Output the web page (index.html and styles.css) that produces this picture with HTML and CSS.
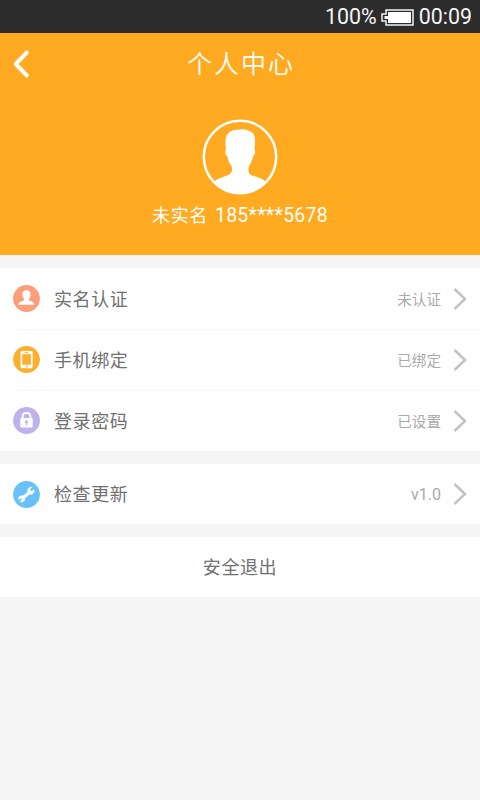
FILE: index.html
```html
<!DOCTYPE html>
<html lang="zh-CN">
<head>
<meta charset="utf-8">
<title>个人中心</title>
<link rel="stylesheet" href="styles.css">
</head>
<body>
<div class="status">
  <span class="percent">100%</span>
  <svg class="battery" width="33" height="17" viewBox="0 0 33 17"><path d="M5 1H32V16H5V12H1V5H5Z" fill="none" stroke="#f4f4f4" stroke-width="1.5"/><path d="M7 3H30V14H7V10H3.5V7H7Z" fill="#fff"/></svg>
  <span class="clock">00:09</span>
</div>
<header class="hero">
  <div class="bar">
    <svg class="back" width="18" height="30" viewBox="0 0 18 30"><path d="M14.8 3.5L3.7 15L14.8 26.5" fill="none" stroke="#fff" stroke-width="4" stroke-linecap="round" stroke-linejoin="round"/></svg>
    <h1>个人中心</h1>
  </div>
  <svg class="avatar" width="76" height="76" viewBox="0 0 76 76">
    <circle cx="38" cy="38" r="36.2" fill="none" stroke="#fff" stroke-width="2.5"/>
    <path d="M12 63C17 58 24 58 28 55C31 52 30 50 29.5 47C27 44 26 41 25.5 37.5C23 36 23 32 24 30C22 17 25 10.5 38 10.5C43 9.5 46 11 48 12.5C54 14 53.5 22 52.5 30C54 32 53 36 51 37.5C50.5 41 49 44 47 47C46 51 46 54 49 56C54 58 60 59 64 63C51 78 25 78 12 63Z" fill="#fff"/>
  </svg>
  <p class="account">未实名 <span class="phone">185****5678</span></p>
</header>
<main>
  <section class="group">
    <div class="row">
      <svg class="icon" viewBox="0 0 27 27"><circle cx="13.5" cy="13.5" r="13.4" fill="#fb9f7b"/><path d="M13.5 5.2C16.6 5.2 17.8 7 17.3 10C18 10.5 17.4 12 16.9 12.1C16.6 13.4 15.9 14 15.9 15C16.5 16.2 21 16.1 21.4 19.8H5.4C5.8 16.1 10.5 16.2 11.1 15C11.1 14 10.4 13.4 10.1 12.1C9.6 12 9 10.5 9.7 10C9.2 7 10.5 5.2 13.5 5.2Z" fill="#fff"/></svg>
      <span class="label">实名认证</span><span class="value">未认证</span>
      <svg class="arrow" viewBox="0 0 14 24"><path d="M1.5 2L12 12L1.5 22"/></svg>
    </div>
    <div class="row">
      <svg class="icon" viewBox="0 0 27 27"><circle cx="13.5" cy="13.5" r="13.4" fill="#fdb02d"/><rect x="7.6" y="5" width="12" height="17.3" rx="1.6" fill="#fff"/><path d="M9.3 8.2H17.9V18.7H9.3Z" fill="#fdb02d"/><path d="M11.8 6.6H15.4" stroke="#fdb02d"/><circle cx="13.6" cy="20.5" r=".9" fill="#fdb02d"/></svg>
      <span class="label">手机绑定</span><span class="value">已绑定</span>
      <svg class="arrow" viewBox="0 0 14 24"><path d="M1.5 2L12 12L1.5 22"/></svg>
    </div>
    <div class="row">
      <svg class="icon" viewBox="0 0 27 27"><circle cx="13.5" cy="13.5" r="13.4" fill="#beb1ec"/><path d="M9.6 12V9.5C9.6 4.9 17.4 4.9 17.4 9.5V12" fill="none" stroke="#fff" stroke-width="2"/><rect x="7.3" y="11" width="12.4" height="9.4" rx="1" fill="#fff"/><circle cx="13.5" cy="14.7" r="1.5" fill="#beb1ec"/><path d="M13.5 15V18.3" stroke="#beb1ec" stroke-width="1.3"/></svg>
      <span class="label">登录密码</span><span class="value">已设置</span>
      <svg class="arrow" viewBox="0 0 14 24"><path d="M1.5 2L12 12L1.5 22"/></svg>
    </div>
  </section>
  <section class="group">
    <div class="row">
      <svg class="icon" viewBox="0 0 27 27"><circle cx="13.5" cy="13.5" r="13.4" fill="#68c2f8"/><path d="M18.8 6.2L16.8 8.8L18.4 10.6L21 8.8C21.7 11.8 19.4 13.7 16.7 13.2L11.8 17.2C11.8 20.2 9.8 21.6 7.1 20.8L9.1 18.6L8 17.2L5.6 18.6C5 15.9 7.2 14.4 10 14.9L14.7 10.9C14.3 8 16 5.8 18.8 6.2Z" fill="#fff" stroke="#fff" stroke-width=".5"/></svg>
      <span class="label">检查更新</span><span class="value version">v1.0</span>
      <svg class="arrow" viewBox="0 0 14 24"><path d="M1.5 2L12 12L1.5 22"/></svg>
    </div>
  </section>
  <section class="group logout">安全退出</section>
</main>
</body>
</html>
```
FILE: styles.css
```css
* { box-sizing: border-box; }
body {
  margin: 0;
  min-height: 800px;
  background: #f5f5f5;
  color: #707070;
  font-family: Roboto, "Noto Sans CJK SC", sans-serif;
}
.status {
  height: 33px;
  padding: 1px 8px 0 0;
  display: flex;
  align-items: center;
  justify-content: flex-end;
  background: #2c2c2c;
  color: #f4f4f4;
  font-size: 21.4px;
  line-height: 30px;
}
.battery { margin: 0 5px 0 4px; }
.hero {
  height: 222px;
  display: flex;
  flex-direction: column;
  align-items: center;
  background: #ffaa20;
  color: #fff;
}
.bar {
  width: 100%;
  height: 60px;
  padding: 0 12px;
  display: grid;
  grid-template-columns: 18px 1fr 18px;
  align-items: center;
}
.back { margin-top: 1px; }
h1 {
  margin: 4px 0 0;
  text-align: center;
  font-size: 25px;
  font-weight: 350;
  letter-spacing: 2px;
  text-indent: 2px;
  line-height: 36px;
}
.avatar { margin-top: 26px; }
.account {
  margin: 7px 0 0;
  font-size: 18px;
  line-height: 28px;
  letter-spacing: .6px;
}
.phone { margin-left: 2px; font-size: 19.4px; letter-spacing: .3px; }
.group { margin-top: 13px; background: #fff; }
.row {
  height: 60px;
  padding: 0 13px;
  display: flex;
  align-items: center;
}
.row + .row {
  height: 61px;
  background: linear-gradient(#f8f8f8, #f8f8f8) 14px 0 / 466px 1px no-repeat;
}
.row:first-child:not(:last-child) { height: 61px; }
.icon { width: 27px; height: 27px; margin-right: 14px; }
.label { flex: 1; margin-top: -2px; font-size: 18px; letter-spacing: .6px; }
.value { margin: -1px 12px 0 0; font-size: 14.6px; color: #aaa; }
.version { margin-top: 1px; font-size: 16px; }
.arrow { width: 14px; height: 24px; fill: none; stroke: #c4c4c4; stroke-width: 2.6; }
.logout {
  height: 60px;
  line-height: 62px;
  text-align: center;
  font-size: 18px;
  letter-spacing: .6px;
}
```
